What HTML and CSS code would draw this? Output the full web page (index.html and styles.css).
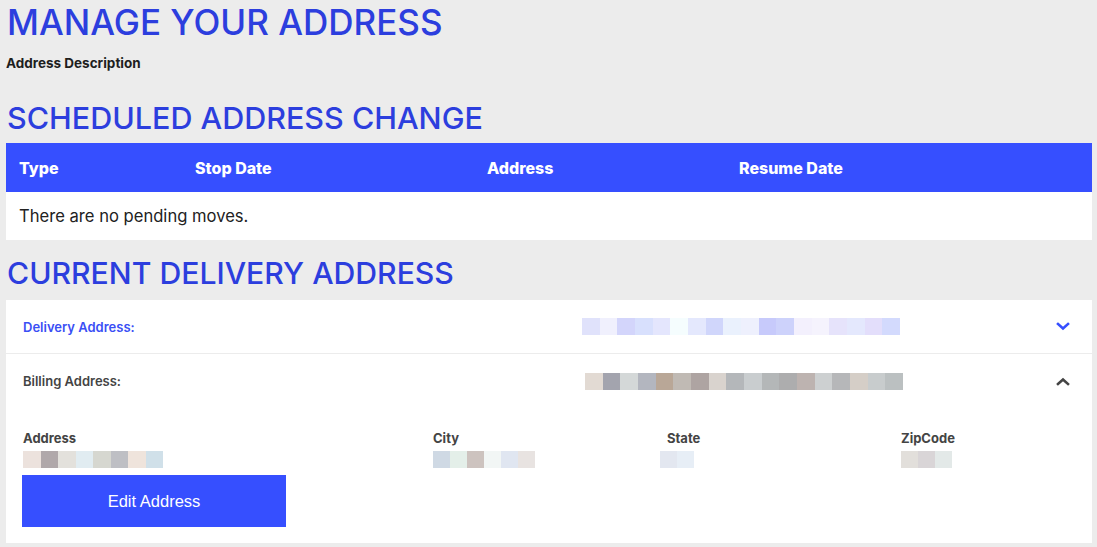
FILE: index.html
```html
<!DOCTYPE html>
<html>
<head>
  <meta charset="utf-8">
  <title>Manage Your Address</title>
  <link rel="stylesheet" href="styles.css">
</head>
<body>

  <h1 class="page_title">MANAGE YOUR ADDRESS</h1>
  <div class="page_desc">Address Description</div>

  <h2 class="section_title">SCHEDULED ADDRESS CHANGE</h2>
  <table class="moves">
    <thead>
      <tr>
        <th class="col_type">Type</th>
        <th class="col_stop">Stop Date</th>
        <th class="col_addr">Address</th>
        <th>Resume Date</th>
      </tr>
    </thead>
    <tbody>
      <tr>
        <td colspan="4">There are no pending moves.</td>
      </tr>
    </tbody>
  </table>

  <h2 class="section_title section_title_2">CURRENT DELIVERY ADDRESS</h2>
  <div class="panel">

    <div class="acc_row acc_row_first">
      <div class="acc_label acc_label_active">Delivery Address:</div>
      <div class="blur blur_row" id="delivery_blur"></div>
      <svg class="chevron chevron_blue" width="14" height="9" viewBox="0 0 14 9">
        <path d="M2 2 L7 6.5 L12 2" fill="none" stroke="currentColor" stroke-width="2.6" stroke-linecap="square"/>
      </svg>
    </div>

    <div class="acc_row">
      <div class="acc_label">Billing Address:</div>
      <div class="blur blur_row blur_row_2" id="billing_blur"></div>
      <svg class="chevron chevron_dark" width="14" height="9" viewBox="0 0 14 9">
        <path d="M2 7 L7 2.5 L12 7" fill="none" stroke="currentColor" stroke-width="2.6" stroke-linecap="square"/>
      </svg>
    </div>

    <div class="details">
      <div class="field">
        <div class="field_label">Address</div>
        <div class="blur blur_addr" id="addr_blur"></div>
      </div>
      <div class="field">
        <div class="field_label">City</div>
        <div class="blur" id="city_blur"></div>
      </div>
      <div class="field field_state">
        <div class="field_label">State</div>
        <div class="blur" id="state_blur"></div>
      </div>
      <div class="field">
        <div class="field_label">ZipCode</div>
        <div class="blur" id="zip_blur"></div>
      </div>
    </div>

    <button class="edit_btn">Edit Address</button>
  </div>

  <script type="text/javascript">
    // pixelated (redacted) values, one colour per cell
    var blur_data = {
      "delivery_blur": ["#e0e2fb","#f0f0fd","#d3d5fb","#d8e0fd","#e4e6fd","#f5fdfe","#e4e8fd","#d0d6fb","#eaf1fd",
                        "#eef0fd","#c7cafb","#cdd2fb","#f3f0fd","#f5f3fd","#e6e3fb","#e4e8fd","#e3defb","#d3dafd"],
      "billing_blur":  ["#e2dad3","#a3a4ae","#d4d8d8","#b3b6bf","#b9a797","#c0bab4","#aea4a2","#d9d3ce","#b4b7ba",
                        "#c9cdcf","#b4b7b8","#adadae","#bdb3b0","#cdd0d1","#b6b7b9","#d5cec7","#c8cccd","#bbc0c1"],
      "addr_blur":     ["#ece2dd","#b0a8aa","#e3e1dc","#e1ecf1","#d6d7d0","#bebfc4","#efe4dc","#d0e0e9"],
      "city_blur":     ["#cfd9e4","#e4efe9","#cdc3bf","#f2f6f5","#e0e6f1","#e8e3e1"],
      "state_blur":    ["#e3e7f0","#e7eef6"],
      "zip_blur":      ["#e2dfdb","#d9d5d7","#e3e9e8"]
    };
    for (var id in blur_data) {
      var box = document.getElementById(id);
      for (var i = 0; i < blur_data[id].length; i++) {
        var cell = document.createElement("span");
        cell.className = "cell";
        cell.style.background = blur_data[id][i];
        box.appendChild(cell);
      }
    }
  </script>
</body>
</html>
```

FILE: styles.css
```css
html {
	font-family: Inter, "Liberation Sans", Arial, sans-serif;
}
body {
	margin: 0 5px 0 6px;
	background-color: #ececec;
	color: #222;
}
.page_title {
	margin: 0;
	font-size: 35px;
	line-height: 44px;
	font-weight: 500;
	color: #2c3ede;
	padding-left: 1px;
}
.page_desc {
	margin-top: 11px;
	font-size: 13.5px;
	line-height: 16px;
	font-weight: 700;
	color: #1e1e1e;
}
.section_title {
	margin: 29px 0 0 0;
	font-size: 30.5px;
	line-height: 36px;
	font-weight: 500;
	color: #2c3ede;
	padding-left: 1px;
}
.section_title_2 {
	margin-top: 15px;
	font-size: 30.2px;
}
.moves {
	margin-top: 7px;
	width: 100%;
	border-collapse: collapse;
	background: #fff;
}
.moves th {
	background: #364fff;
	color: #fff;
	height: 49px;
	padding: 0 0 0 13px;
	text-align: left;
	font-size: 16px;
	font-weight: 800;
}
.moves .col_type { width: 163px; }
.moves .col_stop { width: 279px; }
.moves .col_addr { width: 239px; }
.moves td {
	height: 48px;
	padding: 0 0 0 13px;
	font-size: 16.6px;
	color: #222;
}
.panel {
	margin-top: 9px;
	background: #fff;
	padding: 0 0 16px 0;
}
.acc_row {
	display: flex;
	align-items: center;
	height: 54px;
	padding: 0 22px 0 17px;
}
.acc_row_first {
	height: 53px;
	border-bottom: 1px solid #ececec;
}
.acc_label {
	width: 559px;
	font-size: 13px;
	font-weight: 600;
	color: #444;
}
.acc_label_active {
	color: #3a4ff5;
}
.blur {
	display: flex;
	height: 17px;
}
.blur .cell {
	width: 17px;
	height: 100%;
}
.blur_row .cell {
	width: 17.67px;
}
.blur_row_2 {
	margin-left: 3px;
}
.blur_addr .cell {
	width: 17.5px;
}
.chevron {
	margin-left: auto;
}
.chevron_blue { color: #364fff; }
.chevron_dark { color: #444; }
.details {
	display: grid;
	grid-template-columns: 410px 227px 241px 1fr;
	margin: 22px 0 0 17px;
}
.field_label {
	font-size: 13px;
	line-height: 16px;
	font-weight: 700;
	color: #444;
}
.field .blur {
	margin-top: 5px;
}
.field_state .field_label {
	padding-left: 7px;
}
.edit_btn {
	display: block;
	margin: 7px 0 0 16px;
	width: 264px;
	height: 52px;
	border: none;
	background: #364fff;
	color: #fff;
	font-family: "Liberation Sans", Arial, sans-serif;
	font-size: 16.5px;
}
```
